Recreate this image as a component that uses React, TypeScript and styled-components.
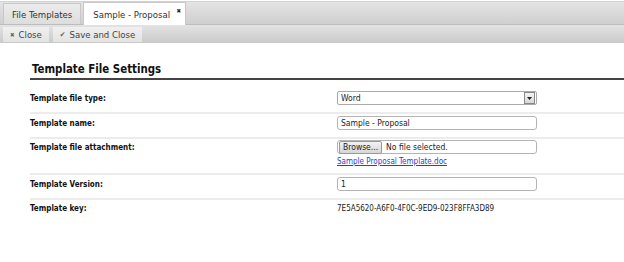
import styled, { createGlobalStyle } from "styled-components";

const GlobalStyle = createGlobalStyle`
    body {
        margin: 0;
        background: #ffffff;
        font-family: "DejaVu Sans Condensed", "DejaVu Sans", Verdana, sans-serif;
        font-stretch: condensed;
        color: #222222;
    }
`;

type Row = { label: string; kind: "select" | "text" | "file" | "plain"; value: string; link?: string };

const rows: Row[] = [
    { label: "Template file type:", kind: "select", value: "Word" },
    { label: "Template name:", kind: "text", value: "Sample - Proposal" },
    { label: "Template file attachment:", kind: "file", value: "No file selected.", link: "Sample Proposal Template.doc" },
    { label: "Template Version:", kind: "text", value: "1" },
    { label: "Template key:", kind: "plain", value: "7E5A5620-A6F0-4F0C-9ED9-023F8FFA3D89" },
];

// extra space above each row, the first one sits under the heading
const rowTop = (i: number, kind: Row["kind"]) => i === 0 ? 11 : kind === "text" ? 2 : 1;

const App = (): JSX.Element => {
    return (<>
        <GlobalStyle />
        <TabStrip>
            <Tab>File Templates</Tab>
            <Tab active>
                Sample - Proposal
                <TabClose>✖</TabClose>
            </Tab>
        </TabStrip>
        <Toolbar>
            <ToolButton><BtnIcon>✖</BtnIcon>Close</ToolButton>
            <ToolButton><BtnIcon check>✔</BtnIcon>Save and Close</ToolButton>
        </Toolbar>
        <Content>
            <Heading>Template File Settings</Heading>
            {rows.map((r, i) => (
                <FormRow key={r.label} top={rowTop(i, r.kind)} last={i === rows.length - 1}>
                    <Label>{r.label}</Label>
                    <Field>
                        {r.kind === "select" && (
                            <Select>
                                <span>{r.value}</span>
                                <SelectArrow>
                                    <svg width="5" height="3" viewBox="0 0 5 3"><path d="M0 0h5L2.5 3z" fill="#222" /></svg>
                                </SelectArrow>
                            </Select>
                        )}
                        {r.kind === "text" && <TextBox>{r.value}</TextBox>}
                        {r.kind === "file" && (<>
                            <TextBox>
                                <Browse>Browse...</Browse>
                                {r.value}
                            </TextBox>
                            <FileLink>{r.link}</FileLink>
                        </>)}
                        {r.kind === "plain" && <Plain>{r.value}</Plain>}
                    </Field>
                </FormRow>
            ))}
        </Content>
    </>);
};

const TabStrip = styled.div`
    display: flex;
    align-items: flex-end;
    gap: 2px;
    height: 22px;
    padding: 0 0 0 3px;
    margin-top: 1px;
    border-top: 1px solid #d2d2d2;
    border-bottom: 1px solid #bdbdbd;
    background: linear-gradient(#e4e4e4, #cfcfcf);
`;

const Tab = styled.div<{ active?: boolean }>`
    position: relative;
    display: flex;
    align-items: center;
    box-sizing: border-box;
    height: ${p => p.active ? "23px" : "21px"};
    padding: 0 ${p => p.active ? "15px" : "8px"} 0 ${p => p.active ? "9px" : "8px"};
    margin-bottom: ${p => p.active ? "-1px" : "0"};
    font-size: 9.5px;
    color: #333333;
    border: 1px solid #c8c8c8;
    border-bottom: none;
    background: ${p => p.active ? "#ffffff" : "linear-gradient(#ececec, #dddddd)"};
`;

const TabClose = styled.span`
    position: absolute;
    top: 4px;
    right: 4px;
    font-size: 6px;
    color: #222222;
`;

const Toolbar = styled.div`
    display: flex;
    align-items: center;
    gap: 4px;
    height: 18px;
    padding: 0 3px;
    background: linear-gradient(#e3e3e3, #cacaca);
`;

const ToolButton = styled.div`
    display: flex;
    align-items: center;
    height: 15px;
    padding: 0 7px;
    font-size: 9.5px;
    color: #444444;
    background: linear-gradient(#f0f0f0, #e3e3e3);
`;

const BtnIcon = styled.span<{ check?: boolean }>`
    font-size: ${p => p.check ? "7.5px" : "6px"};
    margin-right: 4px;
    color: #666666;
`;

const Content = styled.div`
    padding: 19px 0 0 30px;
`;

const Heading = styled.div`
    font-size: 11.4px;
    font-weight: bold;
    color: #111111;
    padding: 0 0 2px 2px;
    border-bottom: 2px solid #444444;
`;

const FormRow = styled.div<{ top: number; last?: boolean }>`
    display: grid;
    grid-template-columns: 307px 1fr;
    align-items: start;
    padding: ${p => p.top}px 0 ${p => p.last ? "0" : "7px"} 0;
    border-bottom: ${p => p.last ? "none" : "2px solid #ececec"};
`;

const Label = styled.div`
    display: flex;
    align-items: center;
    height: 14px;
    font-size: 8px;
    font-weight: bold;
    color: #111111;
`;

const Field = styled.div`
    display: flex;
    flex-direction: column;
    gap: 3px;
`;

const Select = styled.div`
    display: flex;
    align-items: center;
    justify-content: space-between;
    box-sizing: border-box;
    width: 200px;
    height: 14px;
    padding: 0 1px 0 3px;
    font-size: 8.5px;
    border: 1px solid #aaaaaa;
    border-radius: 2px;
`;

const SelectArrow = styled.div`
    display: flex;
    align-items: center;
    justify-content: center;
    width: 9px;
    height: 10px;
    border: 1px solid #888888;
    background: linear-gradient(#f4f4f4, #d8d8d8);
`;

const TextBox = styled.div`
    display: flex;
    align-items: center;
    box-sizing: border-box;
    width: 200px;
    height: 14px;
    padding: 0 3px;
    font-size: 8.5px;
    border: 1px solid #b4b4b4;
    border-radius: 3px;
`;

const Browse = styled.span`
    display: flex;
    align-items: center;
    height: 11px;
    padding: 0 3px;
    margin: 0 4px 0 -2px;
    border: 1px solid #999999;
    border-radius: 2px;
    background: linear-gradient(#f2f2f2, #d6d6d6);
`;

const FileLink = styled.a`
    font-size: 8px;
    color: #2a3fd0;
    text-decoration: underline;
`;

const Plain = styled.div`
    display: flex;
    align-items: center;
    height: 14px;
    font-size: 8px;
`;

export default App;
